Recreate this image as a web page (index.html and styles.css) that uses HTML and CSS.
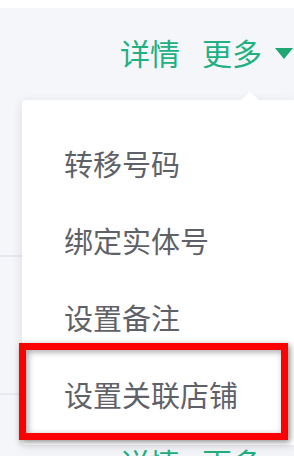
FILE: index.html
```html
<!DOCTYPE html>
<html lang="zh-CN">
<head>
    <meta charset="UTF-8" />
    <meta name="viewport" content="width=device-width, initial-scale=1" />
    <title>更多操作</title>
    <link rel="stylesheet" href="styles.css">
</head>
<body>
    <div class="top_strip"></div>
    <div class="table">
        <div class="row row_first">
            <div class="actions">
                <a class="action">详情</a>
                <a class="action more">更多<span class="caret"></span></a>
            </div>
        </div>
        <div class="row row_mid"></div>
        <div class="row row_last">
            <div class="actions">
                <a class="action">详情</a>
                <a class="action more">更多<span class="caret"></span></a>
            </div>
        </div>
    </div>

    <div class="dropdown">
        <div class="dropdown_arrow"></div>
        <ul class="menu">
            <li>转移号码</li>
            <li>绑定实体号</li>
            <li>设置备注</li>
            <li>设置关联店铺</li>
        </ul>
    </div>

    <div class="highlight"></div>
</body>
</html>
```

FILE: styles.css
```css
body, html {
    margin: 0;
    padding: 0;
    height: 100%;
    overflow: hidden;
    font-family: "Microsoft YaHei", "Noto Sans CJK SC", sans-serif;
    background-color: #f5f6fa;
}
.top_strip {
    height: 8px;
    background-color: #ffffff;
}
.table {
    height: 448px;
    overflow: hidden;
}
.row {
    border-bottom: 2px solid #e8e9f0;
    box-sizing: border-box;
}
.row_first {
    height: 249px;
    padding-top: 28px;
}
.row_mid {
    height: 138px;
}
.row_last {
    height: 200px;
    padding-top: 51px;
}
.actions {
    display: flex;
    justify-content: flex-end;
    align-items: center;
    gap: 22px;
    padding-right: 1px;
    font-size: 30px;
    line-height: 32px;
}
.action {
    color: #21b07f;
    text-decoration: none;
    display: flex;
    align-items: center;
}
.caret {
    width: 0;
    height: 0;
    margin-left: 13px;
    margin-top: 2px;
    border-left: 9px solid transparent;
    border-right: 9px solid transparent;
    border-top: 11px solid #1ea673;
}
.dropdown {
    position: absolute;
    left: 22px;
    top: 100px;
    width: 272px;
    height: 345px;
    background-color: #ffffff;
    border-radius: 4px 0 0 4px;
    box-shadow: 0 2px 12px rgba(0, 0, 0, 0.1);
}
.dropdown_arrow {
    position: absolute;
    top: -8px;
    left: 219px;
    width: 0;
    height: 0;
    border-left: 9px solid transparent;
    border-right: 9px solid transparent;
    border-bottom: 8px solid #ffffff;
}
.menu {
    list-style: none;
    margin: 0;
    padding: 25px 0 0 0;
}
.menu li {
    height: 77px;
    line-height: 77px;
    padding-left: 42px;
    font-size: 29px;
    color: #5f6168;
    white-space: nowrap;
}
.highlight {
    position: absolute;
    left: 19px;
    top: 343px;
    width: 269px;
    height: 97px;
    box-sizing: border-box;
    border: 7px solid #ff0000;
    box-shadow: 2px 2px 6px rgba(0, 0, 0, 0.45), inset 2px 2px 6px rgba(0, 0, 0, 0.35);
}
```
